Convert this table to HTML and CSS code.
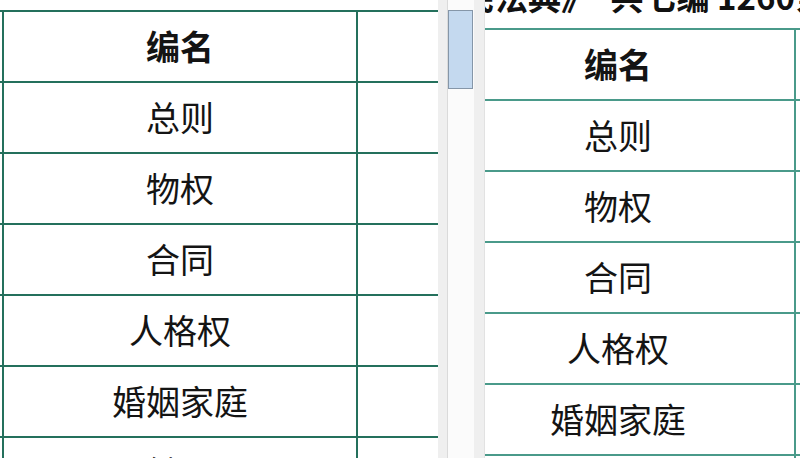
FILE: index.html
```html
<!DOCTYPE html>
<html lang="zh-CN">
<head>
<meta charset="utf-8">
<title>民法典 编名</title>
<link rel="stylesheet" href="styles.css">
</head>
<body>
<div class="app">
  <section class="pane pane-left">
    <div class="sheet sheet-left">
      <div class="row"><div class="cell edge"></div><div class="cell name head">编名</div><div class="cell extra"></div></div>
      <div class="row"><div class="cell edge"></div><div class="cell name">总则</div><div class="cell extra"></div></div>
      <div class="row"><div class="cell edge"></div><div class="cell name">物权</div><div class="cell extra"></div></div>
      <div class="row"><div class="cell edge"></div><div class="cell name">合同</div><div class="cell extra"></div></div>
      <div class="row"><div class="cell edge"></div><div class="cell name">人格权</div><div class="cell extra"></div></div>
      <div class="row"><div class="cell edge"></div><div class="cell name">婚姻家庭</div><div class="cell extra"></div></div>
      <div class="row"><div class="cell edge"></div><div class="cell name">继承</div><div class="cell extra"></div></div>
    </div>
  </section>
  <div class="splitter"></div>
  <div class="scroll"><div class="thumb"></div></div>
  <div class="splitter splitter-b"></div>
  <section class="pane pane-right">
    <div class="caption"><span class="caption-text">《民法典》　共七编 1260条</span></div>
    <div class="sheet sheet-right">
      <div class="row"><div class="cell edge"></div><div class="cell name head">编名</div><div class="cell extra"></div></div>
      <div class="row"><div class="cell edge"></div><div class="cell name">总则</div><div class="cell extra"></div></div>
      <div class="row"><div class="cell edge"></div><div class="cell name">物权</div><div class="cell extra"></div></div>
      <div class="row"><div class="cell edge"></div><div class="cell name">合同</div><div class="cell extra"></div></div>
      <div class="row"><div class="cell edge"></div><div class="cell name">人格权</div><div class="cell extra"></div></div>
      <div class="row"><div class="cell edge"></div><div class="cell name">婚姻家庭</div><div class="cell extra"></div></div>
      <div class="row"><div class="cell edge"></div><div class="cell name">继承</div><div class="cell extra"></div></div>
    </div>
  </section>
</div>
</body>
</html>
```
FILE: styles.css
```css
* { box-sizing: border-box; }
html, body {
  margin: 0;
  padding: 0;
  width: 800px;
  height: 458px;
  overflow: hidden;
  background: #ffffff;
}
body {
  font-family: "Noto Sans CJK SC", "Noto Sans", sans-serif;
  color: #141414;
}
.app {
  display: flex;
  width: 800px;
  height: 458px;
}
.pane {
  overflow: hidden;
  height: 458px;
  background: #ffffff;
}
.pane-left {
  width: 438px;
  flex: 0 0 438px;
}
.splitter {
  flex: 0 0 10px;
  background: #efefef;
  border-right: 1px solid #dadada;
}
.splitter-b {
  flex: 0 0 11px;
  border-right: 1px solid #e2e2e2;
}
.scroll {
  flex: 0 0 26px;
  background: #fbfbfb;
  padding-top: 10px;
}
.thumb {
  width: 25px;
  height: 79px;
  background: #c4d9ef;
  border: 1px solid #8596a8;
}
.pane-right {
  flex: 1 1 auto;
}
.caption {
  height: 28px;
  overflow: hidden;
  margin-left: -56px;
  white-space: nowrap;
  font-size: 33px;
  line-height: 33px;
  font-weight: 700;
  color: #111;
}
.caption-text {
  display: block;
  margin-top: -20px;
}
.sheet {
  display: flex;
  flex-direction: column;
}
.sheet-left {
  margin-top: 10px;
  margin-left: -10px;
}
.sheet-right {
  margin-left: -57px;
}
.row {
  display: grid;
  grid-template-columns: 12px 354px 140px;
  height: 71px;
}
.cell {
  border-top: 2px solid #24705c;
  border-left: 2px solid #24705c;
  display: flex;
  align-items: center;
  justify-content: center;
  font-size: 34px;
  line-height: 1;
}
.sheet-right .cell {
  border-color: #4a9a8a;
}
.cell.edge {
  border-left: none;
}
.cell.head {
  font-weight: 700;
}
.cell.name {
  padding-bottom: 2px;
}
```
